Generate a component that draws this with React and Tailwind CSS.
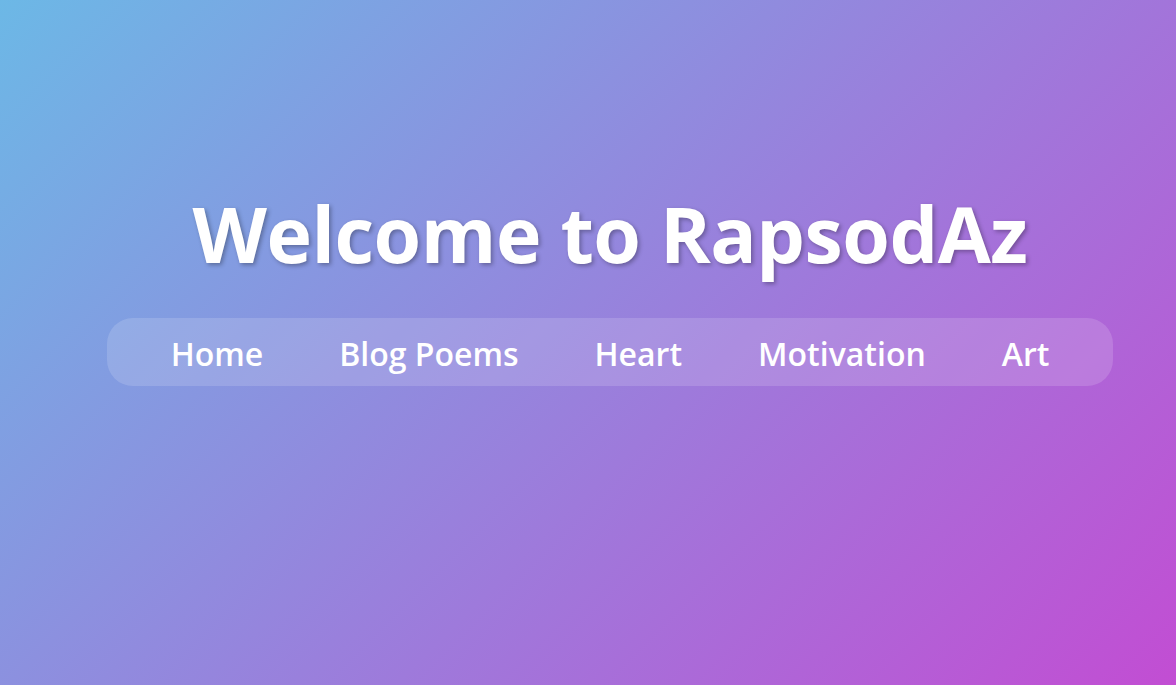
export default function App() {
  const links = ['Home', 'Blog Poems', 'Heart', 'Motivation', 'Art']

  return (
    <div
      className="min-h-[685px] w-full bg-[linear-gradient(135deg,#6cb8e6,#c24dd3)] text-white pl-[44px]"
      style={{ fontFamily: "'Open Sans', 'Noto Sans', sans-serif" }}
    >
      <header className="flex flex-col items-center pt-[184px]">
        <h1 className="text-[77px] font-bold leading-[100px] tracking-[-0.5px] [text-shadow:2px_2px_4px_rgba(0,0,0,0.3)]">
          Welcome to RapsodAz
        </h1>
        <nav className="mt-[34px] flex h-[68px] items-center gap-[76px] rounded-[26px] bg-white/15 px-[64px]">
          {links.map((l) => (
            <a key={l} href="#" className="pt-[4px] text-[32px] font-semibold leading-none">
              {l}
            </a>
          ))}
        </nav>
      </header>
    </div>
  )
}
